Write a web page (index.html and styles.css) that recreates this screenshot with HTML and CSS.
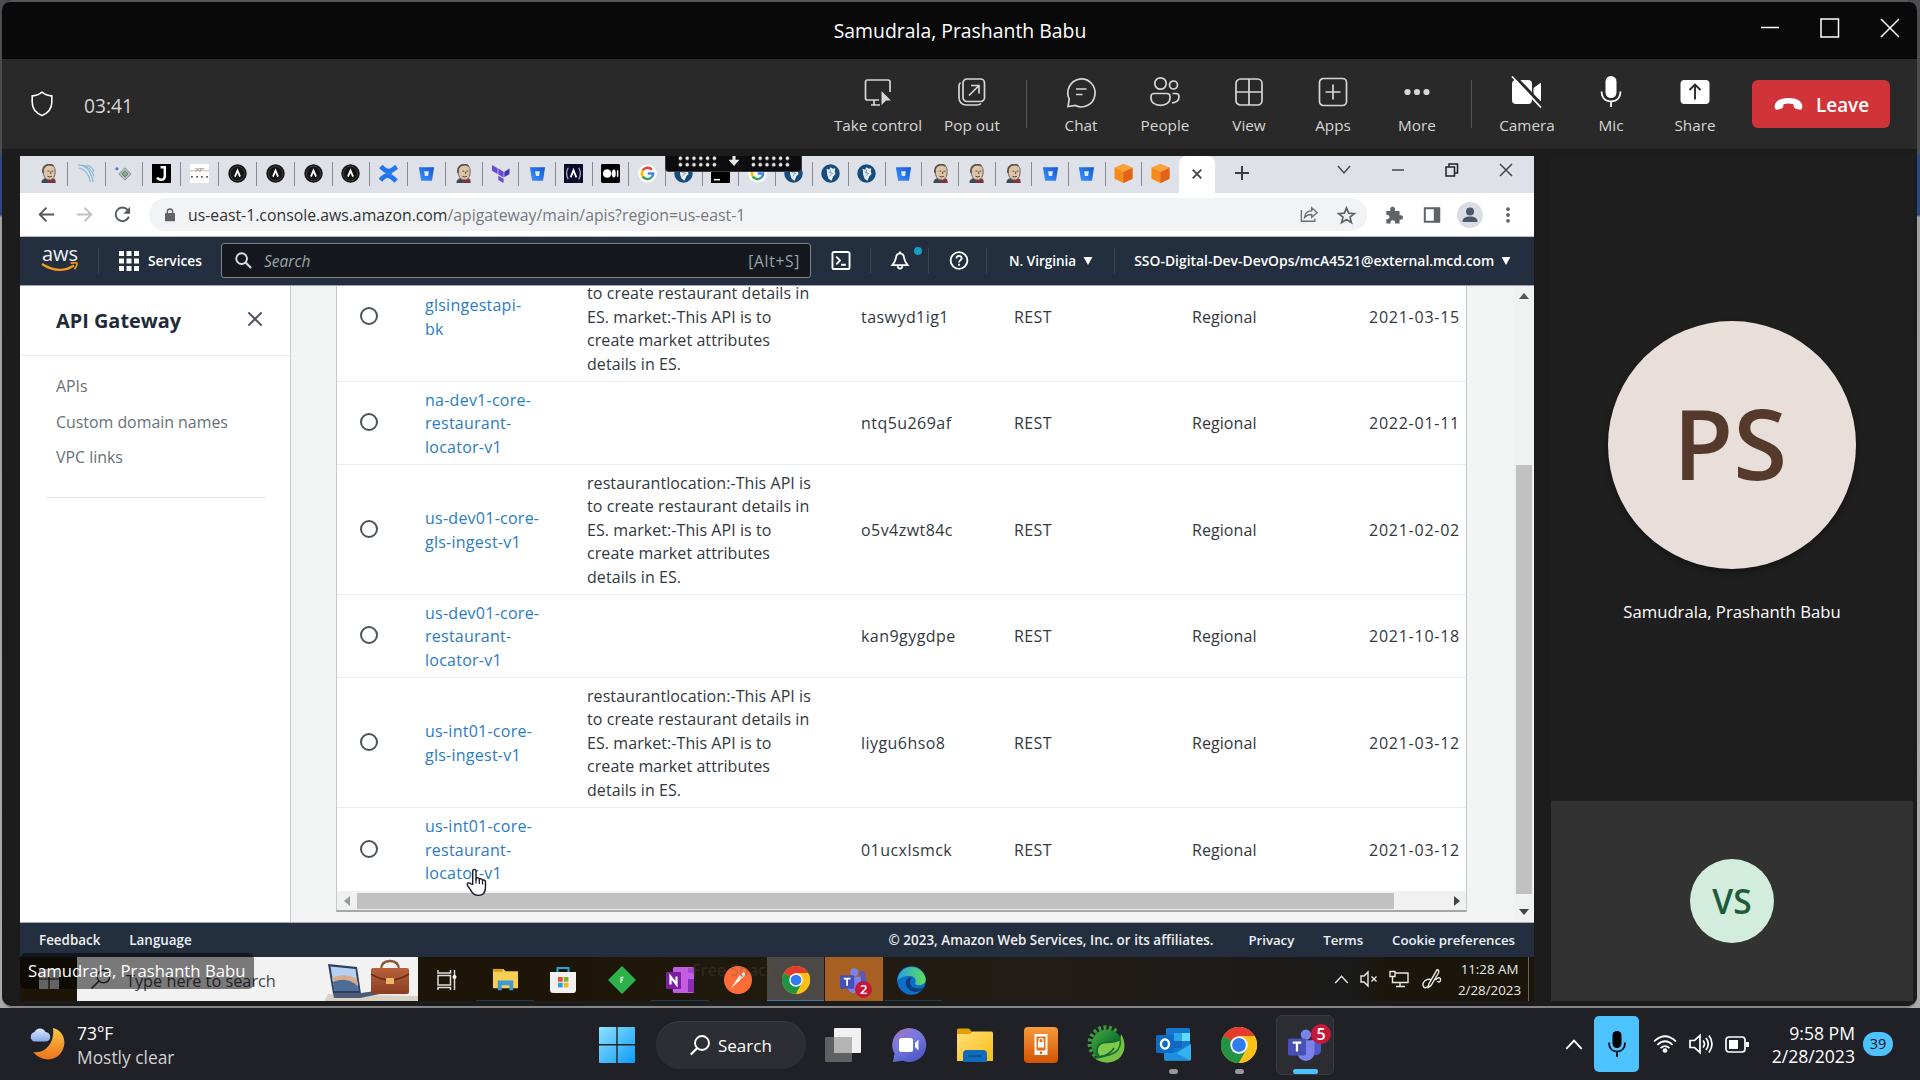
FILE: index.html
```html
<!DOCTYPE html>
<html lang="en">
<head>
<meta charset="utf-8">
<title>Samudrala, Prashanth Babu</title>
<link rel="stylesheet" href="styles.css">
</head>
<body>
<svg class="defs" aria-hidden="true">
  <defs>
    <linearGradient id="g-win" x1="0" y1="0" x2="1" y2="1"><stop offset="0" stop-color="#8fe2fd"/><stop offset="1" stop-color="#0a9bfb"/></linearGradient>
    <linearGradient id="g-moon" x1="0" y1="0" x2="0" y2="1"><stop offset="0" stop-color="#f6c945"/><stop offset="1" stop-color="#f0731c"/></linearGradient>
    <linearGradient id="g-cloud" x1="0" y1="0" x2="0" y2="1"><stop offset="0" stop-color="#dbe8fd"/><stop offset="1" stop-color="#86a9ec"/></linearGradient>
    <linearGradient id="g-edge" x1="0" y1="0" x2="1" y2="0"><stop offset="0" stop-color="#1f9fe4"/><stop offset="1" stop-color="#64de5a"/></linearGradient>
    <linearGradient id="g-chat" x1="0" y1="0" x2="0.6" y2="1"><stop offset="0" stop-color="#a86fb0"/><stop offset="0.45" stop-color="#7a7be0"/><stop offset="1" stop-color="#5059c9"/></linearGradient>
    <linearGradient id="g-fold" x1="0" y1="0" x2="1" y2="1"><stop offset="0" stop-color="#ffe07a"/><stop offset="1" stop-color="#fbbc13"/></linearGradient>
    <linearGradient id="g-lock" x1="0" y1="0" x2="0" y2="1"><stop offset="0" stop-color="#f79a3c"/><stop offset="1" stop-color="#d35400"/></linearGradient>
    <linearGradient id="g-gear" x1="0" y1="0" x2="1" y2="1"><stop offset="0" stop-color="#49ad3f"/><stop offset="0.6" stop-color="#0f6f33"/><stop offset="1" stop-color="#0f6f33"/></linearGradient>
    <linearGradient id="g-bag" x1="0" y1="0" x2="0" y2="1"><stop offset="0" stop-color="#b8623c"/><stop offset="1" stop-color="#8b3d22"/></linearGradient>
    <linearGradient id="g-bb" x1="1" y1="0" x2="0" y2="1"><stop offset="0" stop-color="#1558d6"/><stop offset="1" stop-color="#3a93ff"/></linearGradient>

    <symbol id="f-jenkins" viewBox="0 0 20 20"><path d="M2.500 20c0-3 2-4.500 4-5h8c2 .5 3 2 3 5z" fill="#3b4a5a"/><path d="M4.500 8c0-5 2.500-7.500 6.500-7.500S17 3 17 8s-2 9-6 9-6.500-4-6.500-9z" fill="#dcc4a9" stroke="#6b5a4c" stroke-width="1"/><path d="M4.300 9.500C3 4 6.500.7 11 .7c2 0 3 .5 4 1.300" fill="none" stroke="#5c4f45" stroke-width="1.700"/><path d="M9 13q2.300 1.300 4.500 0M9 7.500h1.700M13.300 7.500H15M12.300 8v2.500" stroke="#4b3a30" fill="none"/><path d="M10 16l3.500 1.500L17 15.500V20l-3.500-1.300L10 20z" fill="#9c2a30"/></symbol>
    <symbol id="f-curve" viewBox="0 0 20 20"><g fill="none" stroke="#7fb6dc" stroke-width="1.200"><path d="M1 1c9 0 14 7 16 18M5 1c7 1 11 6 13 12M2 4c7 2 11 7 12 15M10 1c4 1 7 4 8 7"/></g></symbol>
    <symbol id="f-diamond" viewBox="0 0 20 20"><path d="M10.500 4l6.500 6.500-6.500 6.500L4 10.500z" fill="#b4bfbb" stroke="#87928f"/><path d="M10.500 7.500l3 3-3 3-3-3z" fill="#8fae9f" stroke="#436b57"/><circle cx="2" cy="5" r="1.600" fill="#2f7de0"/></symbol>
    <symbol id="f-j" viewBox="0 0 20 20"><path d="M0 0h20v20H0z" fill="#000"/><path d="M9 3.500h4.500v9q0 4-4 4-3 0-4-2.300" fill="none" stroke="#fff" stroke-width="2.600"/></symbol>
    <symbol id="f-api" viewBox="0 0 20 20"><path d="M0 0h20v20H0z" fill="#fff"/><path d="M0 7h20M5 5h10" stroke="#bbb8ad" stroke-width="1.100"/><path d="M6 8l2-3 2 3M11 8V5h3" stroke="#a29f94" fill="none"/><path d="M1 13.500h2M6.500 13.500h2M11.500 13.500h2M17 13.500h2" stroke="#666" stroke-width="2"/></symbol>
    <symbol id="f-a" viewBox="0 0 20 20"><circle cx="10" cy="10" r="9.700" fill="#151515"/><circle cx="10" cy="10" r="7.500" fill="none" stroke="#4a4a4a" stroke-width=".8"/><path d="M7.300 13.300L10 7l2.700 6.300" fill="none" stroke="#fff" stroke-width="1.900"/></symbol>
    <symbol id="f-conf" viewBox="0 0 20 20"><path d="M2 2.500C6 7 8 8 11 7.500S15.500 5 18.500 3M1.500 17C5 13 6.500 12 9.500 12.300S14.500 14.500 18 18" fill="none" stroke="#2374ef" stroke-width="5"/><path d="M7 9.500l3.500 1 3-1" fill="none" stroke="#2f80f5" stroke-width="2"/></symbol>
    <symbol id="f-bb" viewBox="0 0 20 20"><path d="M2 3.500h16L15.800 17.500H4.300z" fill="url(#g-bb)"/><path d="M7.500 7.500h5l-.8 5H8.300z" fill="#dfe9fb"/></symbol>
    <symbol id="f-terra" viewBox="0 0 20 20"><path d="M1 1l6 3.400v6L1 7zM7.700 4.800l5.600 3.300v6L7.700 11zM7.700 12.400l5.600 3.200V20l-5.600-3.200z" fill="#6a4bd8"/><path d="M14 8.100l5.500-3.300v5.700L14 14z" fill="#4a36ad"/></symbol>
    <symbol id="f-pa" viewBox="0 0 20 20"><path d="M0 0h20v20H0z" fill="#0b0b2b"/><path d="M4.500 4Q1 10 4.500 16M15.500 4Q19 10 15.500 16" fill="none" stroke="#a8a8c2" stroke-width="1.300"/><path d="M7 14l3-7.500 3 7.500" fill="none" stroke="#fff" stroke-width="1.900"/></symbol>
    <symbol id="f-med" viewBox="0 0 20 20"><rect width="20" height="20" rx="1.500"/><circle cx="6.500" cy="10" r="4.500" fill="#fff"/><ellipse cx="13.500" cy="10" rx="2" ry="4.200" fill="#fff"/><path d="M17.500 6.500v7" stroke="#fff" stroke-width="1.500"/></symbol>
    <symbol id="f-g" viewBox="0 0 20 20"><circle cx="10" cy="10" r="9.800" fill="#fff"/><g fill="none" stroke-width="2.600"><path d="M14.600 6A6 6 0 0 0 5 6.800" stroke="#ea4335"/><path d="M5 6.800a6 6 0 0 0 0 6.400" stroke="#fbbc05"/><path d="M5 13.200a6 6 0 0 0 9 1.200" stroke="#34a853"/><path d="M14 14.400a6 6 0 0 0 2-4.400H10.300" stroke="#4285f4"/></g></symbol>
    <symbol id="f-whale" viewBox="0 0 20 20"><circle cx="10" cy="10" r="9.700" fill="#164d7c"/><path d="M6 5l2.500 1L10 3.500l2.500 1.500L15 4.500l-.5 3 .8 3L13 13l-2 4.500L8 15.500 6.500 11z" fill="#e9eff5"/><path d="M8 8.500l4.500 1.500M9 13l3-3.500M10 6v3" stroke="#6f97ba" stroke-width=".9"/></symbol>
    <symbol id="f-term" viewBox="0 0 20 20"><path d="M0 0h20v20H0z"/><path d="M3 16.500h6.500" stroke="#fff" stroke-width="1.600"/></symbol>
    <symbol id="f-cube" viewBox="0 0 20 20"><path d="M10 0l9.500 4v11.500L10 20 .5 15.500V4z" fill="#f58a1f"/><path d="M10 8.500l9.500-4.500v11.500L10 20z" fill="#e2611b"/><path d="M10 0l9.500 4L10 8.500.5 4z" fill="#f9a13b"/></symbol>
    <symbol id="i-chrome" viewBox="0 0 36 36"><circle cx="18" cy="18" r="18" fill="#fbc116"/><path d="M18 18L2.400 9A18 18 0 0 1 33.600 9L34 9.500H18z" fill="#e33b2e"/><path d="M2.400 9A18 18 0 0 0 18 36l7.500-13.500L18 18z" fill="#229342"/><path d="M18 36a18 18 0 0 0 15.600-27H18l7.600 13.200z" fill="#fbc116"/><circle cx="18" cy="18" r="8.700" fill="#fff"/><circle cx="18" cy="18" r="6.900" fill="#2f7cf0"/></symbol>
    <symbol id="i-teams" viewBox="0 0 36 36"><circle cx="19" cy="7" r="5.500" fill="#7b83eb"/><circle cx="30" cy="9" r="3.800" fill="#5059c9"/><path d="M25 13h10v10.500a5.500 5.500 0 0 1-10 3z" fill="#5059c9"/><path d="M10 13h18v13a9 9 0 0 1-18 0z" fill="#7b83eb"/><rect x="0" y="11" width="19" height="18" rx="1.500" fill="#4650b5"/><path d="M5 15.500h9M9.500 15.500V25" stroke="#fff" stroke-width="2.400"/></symbol>
    <symbol id="i-folder10" viewBox="0 0 28 28"><path d="M1 2h11l2 2.500h13V22H1z" fill="#f7cf52"/><path d="M1 2h10v3H1z" fill="#d9a01a"/><path d="M6 14h16v10h-4v-5h-8v5H6z" fill="#3f96d8"/></symbol>
    <symbol id="i-shield" viewBox="0 0 24 26"><path d="M12 1.200C9 3.800 6 4.700 2.200 4.900v6.600c0 6.300 3.800 10.400 9.800 13.100 6-2.700 9.800-6.800 9.800-13.100V4.900C18 4.700 15 3.800 12 1.200z" fill="none" stroke="#fff" stroke-width="1.600"/></symbol>
    <symbol id="i-x" viewBox="0 0 18 18"><path d="M1.500 1.500l15 15M16.500 1.500l-15 15" fill="none" stroke="currentColor" stroke-width="2.200"/></symbol>
    <symbol id="i-caret" viewBox="0 0 10 9"><path d="M0 0h10L5 9z" fill="currentColor"/></symbol>
    <symbol id="i-up" viewBox="0 0 16 10"><path d="M1 9l7-7.500L15 9" fill="none" stroke="currentColor" stroke-width="1.600"/></symbol>
    <symbol id="i-mag" viewBox="0 0 18 18"><circle cx="7" cy="7" r="5.700" fill="none" stroke="currentColor" stroke-width="2"/><path d="M11.200 11.200L17 17" stroke="currentColor" stroke-width="2.300"/></symbol>
  </defs>
</svg>

<div class="desktop">
<div class="window">
  <header class="titlebar">
    <span class="title">Samudrala, Prashanth Babu</span>
    <div class="wincontrols">
      <svg width="20" height="20"><path d="M1 9.500h18" stroke="#fff" stroke-width="1.500"/></svg>
      <svg width="20" height="20"><path d="M1 1h17.500v18H1z" fill="none" stroke="#fff" stroke-width="1.500"/></svg>
      <svg width="20" height="20"><path d="M1 1l18 18M19 1L1 19" stroke="#fff" stroke-width="1.500"/></svg>
    </div>
  </header>

  <div class="toolbar">
    <svg class="shield"><use href="#i-shield"/></svg>
    <span class="timer">03:41</span>
    <div class="tools">
      <div class="tool wide"><svg viewBox="0 0 32 32"><path d="M17 24H5.500a2 2 0 0 1-2-2V6a2 2 0 0 1 2-2H26a2 2 0 0 1 2 2v10M12 24v4.500M9 29h9" fill="none" stroke="currentColor" stroke-width="1.700"/><path d="M19.500 15l9.500 9.500h-5L19.500 29z" fill="currentColor"/></svg><span>Take control</span></div>
      <div class="tool wide"><svg viewBox="0 0 32 32"><rect x="7" y="3" width="21.500" height="22.500" rx="4" fill="none" stroke="currentColor" stroke-width="1.700"/><path d="M4.500 6.500C3 8 3 9 3 10v11c0 5 3 8 7.500 8H21c2 0 3-.5 4-1.500M13 19.500L22.500 10M15 9.500h8v8" fill="none" stroke="currentColor" stroke-width="1.700"/></svg><span>Pop out</span></div>
      <i class="vsep first"></i>
      <div class="tool"><svg viewBox="0 0 32 32"><path d="M3 30.500L4.200 23A13.600 14 0 1 1 10.500 29.500z" fill="none" stroke="currentColor" stroke-width="1.700"/><path d="M11 13h10.500M11 18.500h6.500" stroke="currentColor" stroke-width="1.700"/></svg><span>Chat</span></div>
      <div class="tool"><svg viewBox="0 0 32 32"><g fill="none" stroke="currentColor" stroke-width="1.700"><circle cx="11.500" cy="7.500" r="5.700"/><circle cx="24.500" cy="9" r="4"/><path d="M2 20.500a3 3 0 0 1 3-3h13a3 3 0 0 1 3 3v1.500c0 4.500-4 7.300-9.500 7.300S2 26.500 2 22zM23.500 17.500H27a3 3 0 0 1 3 3c0 4-2.500 6.500-7 6.300"/></g></svg><span>People</span></div>
      <div class="tool"><svg viewBox="0 0 32 32"><rect x="3" y="3" width="26" height="26" rx="4.500" fill="none" stroke="currentColor" stroke-width="1.700"/><path d="M16 3v26M3 16h26" stroke="currentColor" stroke-width="1.700"/></svg><span>View</span></div>
      <div class="tool"><svg viewBox="0 0 32 32"><rect x="2.500" y="2.500" width="27" height="27" rx="4" fill="none" stroke="currentColor" stroke-width="1.700"/><path d="M16 8.500v15M8.500 16h15" stroke="currentColor" stroke-width="1.700"/></svg><span>Apps</span></div>
      <div class="tool"><svg viewBox="0 0 32 32"><g fill="currentColor"><circle cx="6.500" cy="16" r="3.100"/><circle cx="16" cy="16" r="3.100"/><circle cx="25.500" cy="16" r="3.100"/></g></svg><span>More</span></div>
      <i class="vsep"></i>
      <div class="tool solid"><svg viewBox="0 0 32 32"><rect x="1" y="4" width="20" height="24" rx="4" fill="currentColor"/><path d="M22.500 12l7.500-5.500v19L22.500 20z" fill="currentColor"/><path d="M3.500 0L32 30" stroke="#292929" stroke-width="3"/><path d="M1 0.500l29 31" stroke="currentColor" stroke-width="1.800"/></svg><span>Camera</span></div>
      <div class="tool solid"><svg viewBox="0 0 32 32"><rect x="10.500" y="0" width="11" height="22" rx="5.500" fill="currentColor"/><path d="M6.500 15.500c0 6 3.500 10 9.500 10s9.500-4 9.500-10M16 25.500V31" fill="none" stroke="currentColor" stroke-width="1.800"/></svg><span>Mic</span></div>
      <div class="tool solid"><svg viewBox="0 0 32 32"><rect x="1.500" y="4" width="29" height="24" rx="4" fill="currentColor"/><path d="M16 23.500V9M10.500 14L16 8.500l5.500 5.500" fill="none" stroke="#292929" stroke-width="1.900"/></svg><span>Share</span></div>
      <div class="leave"><svg viewBox="0 0 30 14"><path d="M15 .8C24 .8 29.500 4.500 29.300 9.500c0 3-1.500 3.800-3.600 3.300l-3-.8c-2-.5-2.300-2-2.600-4.700Q15 5.500 9.900 7.300C9.600 10 9.300 11.500 7.300 12l-3 .8C2.200 13.300.8 12.500.7 9.500.5 4.500 6 .8 15 .8z" fill="#fff"/></svg><span>Leave</span></div>
    </div>
  </div>

  <main class="stage">
    <section class="shared">
      <div class="tabstrip">
        <div class="tabs a">
          <i><svg><use href="#f-jenkins"/></svg></i><i><svg><use href="#f-curve"/></svg></i><i><svg><use href="#f-diamond"/></svg></i><i><svg><use href="#f-j"/></svg></i><i><svg><use href="#f-api"/></svg></i><i><svg><use href="#f-a"/></svg></i><i><svg><use href="#f-a"/></svg></i><i><svg><use href="#f-a"/></svg></i><i><svg><use href="#f-a"/></svg></i><i><svg><use href="#f-conf"/></svg></i><i><svg><use href="#f-bb"/></svg></i>
        </div>
        <div class="tabs b">
          <i><svg><use href="#f-jenkins"/></svg></i><i><svg><use href="#f-terra"/></svg></i><i><svg><use href="#f-bb"/></svg></i><i><svg><use href="#f-pa"/></svg></i><i><svg><use href="#f-med"/></svg></i><i><svg><use href="#f-g"/></svg></i><i><svg><use href="#f-whale"/></svg></i><i><svg><use href="#f-term"/></svg></i><i><svg><use href="#f-g"/></svg></i><i><svg><use href="#f-whale"/></svg></i><i><svg><use href="#f-whale"/></svg></i><i><svg><use href="#f-whale"/></svg></i><i><svg><use href="#f-bb"/></svg></i><i><svg><use href="#f-jenkins"/></svg></i><i><svg><use href="#f-jenkins"/></svg></i><i><svg><use href="#f-jenkins"/></svg></i><i><svg><use href="#f-bb"/></svg></i><i><svg><use href="#f-bb"/></svg></i><i><svg><use href="#f-cube"/></svg></i><i><svg><use href="#f-cube"/></svg></i>
        </div>
        <div class="activetab"><svg width="10" height="10" viewBox="0 0 10 10"><path d="M.7.7l8.600 8.600M9.300.7L.7 9.300" stroke="#45484c" stroke-width="1.900"/></svg></div>
        <svg class="plus" width="16" height="16"><path d="M8 1v14M1 8h14" stroke="#3b3d40" stroke-width="2"/></svg>
        <div class="chromectl">
          <svg width="14" height="10"><path d="M1 1l6 7 6-7" fill="none" stroke="#444" stroke-width="1.400"/></svg>
          <svg width="14" height="10"><path d="M1 5h12" stroke="#444" stroke-width="1.500"/></svg>
          <svg width="14" height="14"><path d="M1 4h8.500v9H1zM4 4V1h8.500v9H9.500" fill="none" stroke="#222" stroke-width="1.500"/></svg>
          <svg width="14" height="14"><path d="M1 1l12 12M13 1L1 13" stroke="#444" stroke-width="1.500"/></svg>
        </div>
      </div>

      <div class="addressbar">
        <svg class="nav" viewBox="0 0 20 20"><path d="M19 10H3M10 2l-8 8 8 8" fill="none" stroke="#55595d" stroke-width="2.200"/></svg>
        <svg class="nav" viewBox="0 0 20 20"><path d="M1 10h16M10 2l8 8-8 8" fill="none" stroke="#bfc1c3" stroke-width="2.200"/></svg>
        <svg class="nav" viewBox="0 0 20 20"><path d="M17.500 12.500A8 8 0 1 1 16 4.500l1.500 2" fill="none" stroke="#55595d" stroke-width="2.300"/><path d="M19 1v8h-8z" fill="#55595d"/></svg>
        <div class="omnibox">
          <svg class="lock" viewBox="0 0 12 16"><rect x="0" y="5.500" width="12" height="10" rx="1" fill="#5f6368"/><path d="M2.800 6V4a3.200 3.200 0 0 1 6.400 0v2" fill="none" stroke="#5f6368" stroke-width="1.700"/></svg>
          <span class="url">us-east-1.console.aws.amazon.com<em>/apigateway/main/apis?region=us-east-1</em></span>
          <svg class="share" viewBox="0 0 20 18"><path d="M1.500 4v12.500h15v-3M5 12.500c.5-5 3.500-7.500 8-7.500V1.500l6 5.500-6 5V9c-4 0-6 1-8 3.500z" fill="none" stroke="#6b6f73" stroke-width="1.500"/></svg>
          <svg class="star" viewBox="0 0 20 19"><path d="M10 2l2.300 5.500 6 .5-4.600 3.800 1.500 5.700-5.200-3.200-5.200 3.200 1.500-5.700L1.700 8l6-.5z" fill="none" stroke="#5f6368" stroke-width="1.800"/></svg>
        </div>
        <svg class="ext" viewBox="0 0 20 20"><path d="M1.500 5.500h4.700C5 2.500 6.500.8 8.500.8s3.500 1.700 2.300 4.700h5.400v5c2.500-.8 3.800.5 3.800 2.200s-1.500 3-3.800 2.200v4.600h-5c.5-2.500-.7-3.700-2.500-3.700s-3 1.200-2.500 3.700H1.500v-5c2.300.5 3.500-.6 3.500-2.200s-1.200-2.700-3.500-2.200z" fill="#5f6368"/></svg>
        <svg class="ext" viewBox="0 0 20 20"><path d="M2 2.500h16v15H2z" fill="none" stroke="#5f6368" stroke-width="2.200"/><path d="M12 2h7v16h-7z" fill="#5f6368"/></svg>
        <svg class="avatar" viewBox="0 0 26 26"><circle cx="13" cy="13" r="13" fill="#dadde3"/><circle cx="13" cy="9.500" r="4" fill="#4b5668"/><path d="M5.500 20c0-4 3-5.500 7.500-5.500s7.500 1.500 7.500 5.500z" fill="#4b5668"/></svg>
        <svg class="ext" viewBox="0 0 20 20"><g fill="#5f6368"><circle cx="10" cy="3.500" r="2.100"/><circle cx="10" cy="10" r="2.100"/><circle cx="10" cy="16.500" r="2.100"/></g></svg>
      </div>

      <nav class="awsnav">
        <div class="awslogo"><span>aws</span><svg viewBox="0 0 38 11"><path d="M1 2q17 11 32 1.500" fill="none" stroke="#f79a1c" stroke-width="2.200"/><path d="M29.500 1.200q5.500-1 6.500 0 .5 2-2.500 6" fill="none" stroke="#f79a1c" stroke-width="1.700"/></svg></div>
        <i class="asep"></i>
        <svg class="waffle" viewBox="0 0 20 20"><g fill="#fff"><path d="M0 0h5v5H0zM7.500 0h5v5h-5zM15 0h5v5h-5zM0 7.500h5v5H0zM7.500 7.500h5v5h-5zM15 7.500h5v5h-5zM0 15h5v5H0zM7.500 15h5v5h-5zM15 15h5v5h-5z"/></g></svg>
        <span class="services">Services</span>
        <div class="awssearch"><svg><use href="#i-mag"/></svg><span class="ph">Search</span><span class="kbd">[Alt+S]</span></div>
        <div class="navicon w59"><svg viewBox="0 0 20 20"><rect x="1" y="1" width="18" height="18" rx="2" fill="none" stroke="#fff" stroke-width="2"/><path d="M5 6l4 4-4 4M10 14.500h5" fill="none" stroke="#fff" stroke-width="1.900"/></svg></div>
        <i class="asep"></i>
        <div class="navicon bell"><svg viewBox="0 0 20 20"><path d="M10 2.500c-2.500 0-4 2-4.300 4.800C5.300 10.500 4 12.500 2 14.800h16c-2-2.300-3.300-4.300-3.700-7.500C14 4.500 12.500 2.500 10 2.500zM10 .5v2M7.500 15.500c.3 4 4.700 4 5 0" fill="none" stroke="#fff" stroke-width="1.900"/></svg><b></b></div>
        <i class="asep"></i>
        <div class="navicon help"><svg viewBox="0 0 20 20"><circle cx="10" cy="10" r="8.800" fill="none" stroke="#fff" stroke-width="2"/><path d="M7.300 8c0-3.800 5.600-3.600 5.500-.3 0 1.800-2.700 2-2.700 4.300M10 13.500v2" fill="none" stroke="#fff" stroke-width="1.900"/></svg></div>
        <i class="asep"></i>
        <span class="region">N. Virginia</span><svg class="caret"><use href="#i-caret"/></svg>
        <i class="asep third"></i>
        <span class="account">SSO-Digital-Dev-DevOps/mcA4521@external.mcd.com</span><svg class="caret"><use href="#i-caret"/></svg>
      </nav>

      <div class="console">
        <aside class="sidenav">
          <div class="sidehead"><h1>API Gateway</h1><svg><use href="#i-x"/></svg></div>
          <ul><li>APIs</li><li>Custom domain names</li><li>VPC links</li></ul>
        </aside>
        <div class="content">
          <div class="tablewrap">
            <div class="row tall first"><i></i><a>glsingestapi-<br>bk</a><p>to create restaurant details in<br>ES. market:-This API is to<br>create market attributes<br>details in ES.</p><span class="id">taswyd1ig1</span><span class="ty">REST</span><span>Regional</span><span class="dt">2021-03-15</span></div>
            <div class="row"><i></i><a>na-dev1-core-<br>restaurant-<br>locator-v1</a><p></p><span class="id">ntq5u269af</span><span class="ty">REST</span><span>Regional</span><span class="dt">2022-01-11</span></div>
            <div class="row tall"><i></i><a>us-dev01-core-<br>gls-ingest-v1</a><p>restaurantlocation:-This API is<br>to create restaurant details in<br>ES. market:-This API is to<br>create market attributes<br>details in ES.</p><span class="id">o5v4zwt84c</span><span class="ty">REST</span><span>Regional</span><span class="dt">2021-02-02</span></div>
            <div class="row"><i></i><a>us-dev01-core-<br>restaurant-<br>locator-v1</a><p></p><span class="id">kan9gygdpe</span><span class="ty">REST</span><span>Regional</span><span class="dt">2021-10-18</span></div>
            <div class="row tall"><i></i><a>us-int01-core-<br>gls-ingest-v1</a><p>restaurantlocation:-This API is<br>to create restaurant details in<br>ES. market:-This API is to<br>create market attributes<br>details in ES.</p><span class="id">liygu6hso8</span><span class="ty">REST</span><span>Regional</span><span class="dt">2021-03-12</span></div>
            <div class="row last"><i></i><a>us-int01-core-<br>restaurant-<br>locator-v1</a><p></p><span class="id">01ucxlsmck</span><span class="ty">REST</span><span>Regional</span><span class="dt">2021-03-12</span></div>
            <div class="hscroll"><svg viewBox="0 0 6 10"><path d="M6 0v10L0 5z" fill="#9a9a9a"/></svg><b></b><svg viewBox="0 0 6 10"><path d="M0 0v10l6-5z" fill="#444"/></svg></div>
          </div>
          <div class="vscroll"><svg viewBox="0 0 10 6"><path d="M0 6h10L5 0z" fill="#555"/></svg><b></b><svg viewBox="0 0 10 6"><path d="M0 0h10L5 6z" fill="#444"/></svg></div>
        </div>
      </div>

      <footer class="awsfoot">
        <span class="fb">Feedback</span><span class="lang">Language</span>
        <span class="copy">© 2023, Amazon Web Services, Inc. or its affiliates.</span><span class="priv">Privacy</span><span class="terms">Terms</span><span class="cook">Cookie preferences</span>
      </footer>

      <div class="bar10">
        <div class="start10"><svg viewBox="0 0 20 20"><path d="M0 0h9.400v9.400H0zM10.600 0H20v9.400h-9.400zM0 10.600h9.400V20H0zM10.600 10.600H20V20h-9.400z" fill="#c9c9c9"/></svg></div>
        <div class="search10"><svg class="m" viewBox="0 0 20 20"><circle cx="12.500" cy="7.500" r="6.300" fill="none" stroke="#333" stroke-width="1.400"/><path d="M8 12l-7.500 7.500" stroke="#333" stroke-width="1.600"/></svg><span>Type here to search</span>
          <svg class="art" viewBox="0 0 94 42"><path d="M4 36l90 2v6H0z" fill="#d9d2c6"/><path d="M4 6l29 3 4 27H9z" fill="#2e3d60"/><path d="M6.500 8.500l25 2.500 3 22H10.500z" fill="#b4d2f0"/><path d="M8 20q12-6 25 1l1 6H9.500z" fill="#d9ab8c"/><path d="M9 24q14-6 24.500 4l1 5H10.500z" fill="#4b6d98"/><path d="M9 35h28l22-3-3 4-20 4H10z" fill="#4e5a78"/><path d="M57 12q0-9 9-9t9 9" fill="none" stroke="#8a5a38" stroke-width="2.300"/><rect x="47" y="10" width="38" height="26" rx="2" fill="url(#g-bag)"/><path d="M47 16q19 12 38 0" fill="none" stroke="#6b2c16" stroke-width="1.500"/><rect x="62" y="20" width="8" height="6" fill="#e9b765"/></svg></div>
        <div class="apps10">
          <i><svg width="20" height="20" viewBox="0 0 20 20"><path d="M1 5.500h12.500v9.500H1zM1 0v3h12.500V0M1 20v-2.500h12.500V20M17.500 0v20" fill="none" stroke="#ddd" stroke-width="1.500"/><circle cx="17.500" cy="7" r="2" fill="#fff"/></svg></i>
          <i class="ul"><svg width="27" height="27"><use href="#i-folder10"/></svg></i>
          <i><svg width="28" height="28" viewBox="0 0 28 28"><path d="M8.500 7V2h11v5" fill="none" stroke="#23a6e0" stroke-width="2"/><path d="M1 6h26v18q0 3-3 3H4q-3 0-3-3z" fill="#f1f1f1"/><path d="M9 11h4.700v4.700H9z" fill="#e8502f"/><path d="M14.700 11h4.700v4.700h-4.700z" fill="#7eb72a"/><path d="M9 16.700h4.700v4.700H9z" fill="#2a9fe0"/><path d="M14.700 16.700h4.700v4.700h-4.700z" fill="#f5b81c"/></svg></i>
          <i><svg width="28" height="28" viewBox="0 0 28 28"><path d="M14 0l14 14-14 14L0 14z" fill="#2db14a"/><path d="M13 17v-5.500h2.500M13 14h2" fill="none" stroke="#dff3e2" stroke-width="1.300"/></svg></i>
          <i class="ul"><svg width="28" height="26" viewBox="0 0 28 26"><rect x="7" width="21" height="26" rx="1.500" fill="#c45de0"/><path d="M22 1h6v5h-6z" fill="#a545cc"/><path d="M22 12h6v13h-6z" fill="#8a2cb5"/><rect y="5" width="15" height="17" rx="1" fill="#7a1fa2"/><path d="M4.500 17.500V9.500l6 8V9.500" fill="none" stroke="#fff" stroke-width="2.200"/></svg></i>
          <i><svg width="28" height="28" viewBox="0 0 28 28"><circle cx="14" cy="14" r="14" fill="#ff6c37"/><path d="M7 22l9-13 3 2.500L8.500 21zM17 8l3-2 1.500 3-2 2z" fill="#fff"/></svg></i>
          <i class="on"><svg width="28" height="28"><use href="#i-chrome"/></svg></i>
          <i class="alert"><svg width="27" height="27"><use href="#i-teams"/></svg><b>2</b></i>
          <i class="ul"><svg width="29" height="29" viewBox="0 0 29 29"><circle cx="14.500" cy="14.500" r="14.300" fill="#0f6fc6"/><path d="M.3 15A14.300 14.300 0 0 1 28.700 13c.3 4-3 6.500-8 6-3-.5-2.500-2-2-4 0-3-2.500-5-6-5C7 10 2 12 .3 15z" fill="url(#g-edge)"/><path d="M10 13c-3 5 0 12 8 13 4 0 7-2 9-5-6 3-14 1-14-5 0-2 1-3 2-4-2-1-4 0-5 1z" fill="#0a3f7d"/></svg></i>
        </div>
        <span class="ghost">Free Space</span>
        <div class="tray10">
          <svg width="15" height="9"><use href="#i-up"/></svg>
          <svg width="18" height="16" viewBox="0 0 18 16"><path d="M1 5h3l4-4v14l-4-4H1zM11.500 5.500l5 5M16.500 5.500l-5 5" fill="none" stroke="#e8e8e8" stroke-width="1.400"/></svg>
          <svg width="20" height="18" viewBox="0 0 20 18"><path d="M6 3h13v9.500H3.500V9M11 12.500V16M7 16.500h9M1 1.500h5v5H1zM3.500 6v6.500" fill="none" stroke="#e8e8e8" stroke-width="1.400"/></svg>
          <svg width="20" height="20" viewBox="0 0 20 20"><path d="M15 .8q2.500.2 1.500 3L9 16.500l-2.500 2 .3-3.500zM8.500 10.500C4 9.500.5 13 1 16.500c1 3.500 5 2.500 6-1M13.500 11c2-3 5.500-3 5 .3-.3 2-2.500 2.200-3 .7" fill="none" stroke="#e8e8e8" stroke-width="1.400"/></svg>
          <div class="clock10"><span>11:28 AM</span><span>2/28/2023</span></div>
        </div>
      </div>

      <div class="dragbar"><i></i><svg viewBox="0 0 14 14"><path d="M5 0h4v6h5l-7 8-7-8h5z" fill="#e6e6e6"/></svg><i></i></div>
      <svg class="hand" viewBox="0 0 22 30"><path d="M7 17V3.500C7 .5 10.500.5 10.500 3.500V11c1-1.500 3.500-1 3.500.7 1-1 3.200-.7 3.400 1 1.200-.8 3 0 3 1.800V20c0 5-2 8.500-7.500 8.500-5 0-6.500-2.500-8-5.500L1.500 18C.5 15.500 3.500 14.500 5 16.500z" fill="#fff" stroke="#1b1b2b" stroke-width="1.500"/><path d="M10.500 11v5M14 12v4.500M17.300 13v4" stroke="#1b1b2b" stroke-width="1.300"/></svg>
      <span class="presenter">Samudrala, Prashanth Babu</span>
    </section>

    <section class="people">
      <div class="tile big"><div class="av"><span>PS</span></div><span>Samudrala, Prashanth Babu</span></div>
      <div class="tile small"><div class="av"><span>VS</span></div></div>
    </section>
  </main>
</div>

<div class="taskbar">
  <div class="weather">
    <svg width="36" height="36" viewBox="0 0 36 36"><path d="M24 2c12 3 15 17 7 26-7 8-19 7-27-2 12 2 22-9 20-24z" fill="url(#g-moon)"/><path d="M5 15.500a5 5 0 0 1 .5-9.500 6 6 0 0 1 11 0c6 0 6.500 9.500.5 9.500z" fill="url(#g-cloud)"/></svg>
    <div><span class="temp">73°F</span><span class="cond">Mostly clear</span></div>
  </div>
  <div class="pinned">
    <i class="cell"><svg width="36" height="36" viewBox="0 0 36 36"><path d="M1 0h16.300v17H0V1q0-1 1-1zM18.700 0H35q1 0 1 1v16H18.700zM0 18.400h17.300V36H1q-1 0-1-1zM18.700 18.400H36V35q0 1-1 1H18.700z" fill="url(#g-win)"/></svg></i>
    <div class="searchpill"><svg viewBox="0 0 20 20"><circle cx="12" cy="8" r="7" fill="none" stroke="#fff" stroke-width="1.900"/><path d="M7.300 13L.8 19.500" stroke="#fff" stroke-width="2.200"/></svg><span>Search</span></div>
    <i class="cell"><svg width="36" height="34" viewBox="0 0 36 34"><rect y="9" width="27" height="25" rx="1" fill="#606060"/><rect x="9" width="27" height="25" rx="1" fill="#f1f1f1"/><path d="M9 9h18v16H9z" fill="#b4b4b4"/></svg></i>
    <i class="cell"><svg width="34" height="34" viewBox="0 0 34 34"><path d="M17 0a17 17 0 1 1-6 32.800L1 34l1.500-8.500A17 17 0 0 1 17 0z" fill="url(#g-chat)"/><rect x="7" y="10" width="14" height="14" rx="2.500" fill="#fff"/><path d="M23 15l3.500-3.500v11L23 19z" fill="#fff"/></svg></i>
    <i class="cell"><svg width="36" height="34" viewBox="0 0 36 34"><path d="M0 2q0-1.500 1.500-1.500H11q1.500 0 2.500 1.500l1.500 2v5H0z" fill="#e0a006"/><path d="M0 6h13l2.500-2.500H34.500Q36 3.500 36 5v28H0z" fill="url(#g-fold)"/><path d="M6 34V26q0-4 4-4h16q4 0 4 4v8z" fill="#0f6cbd"/><path d="M11 28h14" stroke="#0a4a8a" stroke-width="1.500"/></svg></i>
    <i class="cell"><svg width="34" height="36" viewBox="0 0 34 36"><rect width="34" height="36" rx="4" fill="url(#g-lock)"/><path d="M10.500 7h13v21h-13z" fill="#fff"/><path d="M12.500 9.500h9v14h-9z" fill="#e2711d"/><path d="M14 15h6v5.500h-6z" fill="#fff"/><path d="M15 15v-2q0-1.700 2-1.700t2 1.700v2" fill="none" stroke="#fff" stroke-width="1.200"/><circle cx="17" cy="25.700" r="1.200" fill="#d35400"/></svg></i>
    <i class="cell"><svg width="36" height="37" viewBox="0 0 36 37"><path d="M27 5.200A16 16 0 1 0 9 31.500" fill="none" stroke="#3c9b3c" stroke-width="4.500" stroke-dasharray="2.800 2.400"/><circle cx="18" cy="19" r="15.500" fill="url(#g-gear)"/><path d="M32 8C37 16 37 26 30 32.500 23 38 13 38 6 32.500 17 33 30.500 24 32 8z" fill="#74bf44"/><path d="M31 13c2 11-6 17-21 17.500C5 21 11 16 18 16.500c6 0 10-.5 13-3.500z" fill="#7fca4a" stroke="#12692f" stroke-width="1.500"/><path d="M4 31.500C12 32 21 28.500 25 22" fill="none" stroke="#12692f" stroke-width="1.600"/></svg></i>
    <i class="cell run"><svg width="35" height="33" viewBox="0 0 35 33"><rect x="10" y="0" width="24" height="28" rx="1.500" fill="#1577cf"/><path d="M18 5h8v8h-8z" fill="#28a8ea"/><path d="M26 5h8v8h-8z" fill="#5fdcff"/><path d="M18 13h8v7h-8z" fill="#0f68b8"/><path d="M8 32l27-16v15q0 1.500-1.500 1.500H9z" fill="#31b3f2"/><path d="M8 18l26 14.500H10q-2 0-2-2z" fill="#1f8fdf"/><rect y="7" width="18" height="18" rx="1.500" fill="#0f6cc4"/><ellipse cx="9" cy="16" rx="4" ry="4.600" fill="none" stroke="#fff" stroke-width="2.400"/></svg></i>
    <i class="cell run"><svg width="36" height="36"><use href="#i-chrome"/></svg></i>
    <i class="cell teams"><svg width="36" height="34"><use href="#i-teams"/></svg><b>5</b></i>
  </div>
  <div class="tray">
    <svg class="chev"><use href="#i-up"/></svg>
    <div class="mictile"><svg width="18" height="26" viewBox="0 0 18 26"><rect x="4.500" y="0" width="9" height="17" rx="4.500"/><path d="M1 11.500c0 5.500 3 9 8 9s8-3.500 8-9M9 20.500V26" fill="none" stroke="#000" stroke-width="1.700"/></svg></div>
    <svg width="24" height="18" viewBox="0 0 24 18"><g fill="none" stroke="#fff" stroke-width="1.700"><path d="M1 6.500Q12-4 23 6.500M4.300 10Q12 2.500 19.700 10M7.500 13.200Q12 9 16.500 13.200"/></g><circle cx="12" cy="15.500" r="2.300" fill="#fff"/></svg>
    <svg width="24" height="20" viewBox="0 0 24 20"><g fill="none" stroke="#fff" stroke-width="1.700"><path d="M1 6.500h4.500L11 1.500v17l-5.500-5H1zM14 6.500q3 3.500 0 7M17 4q4.500 6 0 12M20 1.500q6 8.500 0 17"/></g></svg>
    <svg width="24" height="17" viewBox="0 0 24 17"><rect x="1" y="1" width="19" height="15" rx="3" fill="none" stroke="#fff" stroke-width="1.700"/><path d="M4 4h9v9H4zM21 6h3v5h-3z" fill="#fff"/></svg>
    <div class="clock"><span>9:58 PM</span><span>2/28/2023</span></div>
    <b class="count">39</b>
  </div>
</div>
</div>
</body>
</html>
```
FILE: styles.css
```css
* { box-sizing: border-box; }
html, body { margin: 0; padding: 0; }
body { width: 1920px; height: 1080px; overflow: hidden; font-family: "Open Sans", "Noto Sans", sans-serif; }
svg { display: block; flex: none; overflow: visible; }
span { white-space: nowrap; }
.defs { position: absolute; width: 0; height: 0; }

.desktop { width: 1920px; height: 1080px; display: flex; flex-direction: column; background: linear-gradient(#4b4d50 0, #4b4d50 153px, #2c4a80 155px, #2c4a80 215px, #a0a0a0 217px, #a9abad 1008px); }

/* meeting window */
.window { height: 1006px; margin: 0 3px 0 2px; padding-top: 2px; display: flex; flex-direction: column; border-radius: 10px; background: #1f1f1f; overflow: hidden; box-shadow: inset 0 2px 0 #55575a, 0 2px 0 #858585; flex: none; }
.titlebar { height: 57px; background: #090909; border-bottom: 1px solid #000; display: flex; align-items: center; justify-content: center; position: relative; flex: none; border-radius: 8px 8px 0 0; }
.title { color: #fff; font-size: 19.400px; margin-left: 1px; }
.wincontrols { position: absolute; right: 17px; top: 16px; display: flex; gap: 40px; }
.toolbar { height: 90px; background: #292929; display: flex; align-items: center; flex: none; padding: 0 27px 0 28px; }
.shield { width: 24px; height: 26px; }
.timer { color: #d6d6d6; font-size: 19.200px; margin-left: 30px; padding-top: 2px; }
.tools { display: flex; margin-left: auto; height: 90px; }
.tool { width: 84px; display: flex; flex-direction: column; align-items: center; padding-top: 17px; color: #d6d6d6; font-size: 15.300px; line-height: 20px; }
.tool.wide { width: 94px; }
.tool svg { width: 32px; height: 32px; margin-bottom: 7px; }
.tool.solid svg { color: #fff; }
.vsep { width: 1px; height: 48px; background: #555; margin: 21px 13px 0 12px; flex: none; }
.vsep.first { margin: 21px 12px 0 7px; }
.leave { width: 138px; height: 48px; margin: 21px 0 0 15px; border-radius: 6px; background: #d13438; color: #fff; font-weight: 600; font-size: 18.900px; display: flex; align-items: center; padding-left: 22px; gap: 13px; }
.leave svg { width: 29px; height: 14px; }
.leave span { padding-top: 2px; }

.stage { flex: 1; display: flex; padding: 7px 4px 5px 18px; background: #1c1c1c; }
.shared { width: 1514px; height: 845px; display: flex; flex-direction: column; position: relative; overflow: hidden; background: #fff; flex: none; }

/* browser chrome */
.tabstrip { height: 37px; background: #dee1e7; display: flex; align-items: stretch; padding-left: 10px; flex: none; }
.tabs { display: grid; grid-auto-flow: column; align-items: center; }
.tabs.a { width: 416px; grid-auto-columns: 1fr; }
.tabs.b { width: 733px; grid-auto-columns: 1fr; }
.tabs i { display: flex; justify-content: center; align-items: center; height: 24px; margin-top: -2px; border-right: 1px solid #878a90; }
.tabs.b i:last-child { border-right: 0; }
.tabs svg { width: 19px; height: 19px; }
.activetab { width: 36px; background: #fff; border-radius: 8px 8px 0 0; display: flex; align-items: center; justify-content: center; padding-bottom: 2px; }
.plus { margin: 9px 0 0 19px; }
.chromectl { margin-left: auto; display: flex; align-items: center; gap: 40px; padding: 0 21px 9px 0; }
.addressbar { height: 44px; display: flex; align-items: center; background: #fff; border-bottom: 1px solid #b9c0c7; padding: 0 17px 0 18px; flex: none; }
.nav { width: 17px; height: 17px; margin-right: 21px; }
.omnibox { width: 1220px; height: 33px; margin: 0 18px 0 -3px; border-radius: 17px; background: #f1f3f4; display: flex; align-items: center; padding: 0 11px 0 16px; }
.lock { width: 10px; height: 14px; }
.url { margin-left: 13px; font-size: 15.800px; color: #303236; }
.url em { font-style: normal; color: #75797e; }
.share { width: 18px; height: 17px; margin-left: auto; }
.star { width: 19px; height: 18px; margin-left: 19px; }
.ext { width: 18px; height: 18px; margin-right: 20px; }
.avatar { width: 26px; height: 26px; margin: 0 16px 0 -4px; }
.addressbar > .ext:last-child { margin-right: 0; }

/* console header */
.awsnav { height: 48px; background: #232f3e; display: flex; align-items: center; color: #fff; font-weight: 600; font-size: 13.700px; flex: none; padding: 0 0 1px 21px; }
.awslogo { width: 38px; display: flex; flex-direction: column; align-items: center; line-height: 15px; font-size: 20px; font-weight: 500; }
.awslogo span { margin-top: -2px; color: #eef0f2; }
.awslogo svg { width: 38px; height: 11px; margin-top: 1px; }
.asep { width: 1px; height: 25px; background: #3a4656; flex: none; }
.awslogo + .asep { margin: 0 20px 0 19px; }
.waffle { width: 20px; height: 20px; margin-right: 9px; }
.services { width: 73px; }
.awssearch { width: 590px; height: 35px; border: 1px solid #7d8488; border-radius: 3px; background: #15191f; display: flex; align-items: center; padding: 0 10px 0 13px; color: #9aa5a5; font-weight: 400; font-size: 15.500px; }
.awssearch svg { width: 17px; height: 17px; color: #ddd; margin-right: 12px; }
.ph { font-style: italic; }
.kbd { margin-left: auto; letter-spacing: .7px; }
.navicon { width: 57px; display: flex; justify-content: center; position: relative; }
.navicon.w59 { width: 59px; }
.navicon.help { padding-left: 2px; }
.navicon svg { width: 20px; height: 19px; }
.navicon.bell b { position: absolute; width: 8px; height: 8px; border-radius: 50%; background: #14a0c6; left: 43px; top: -4px; }
.region { margin-left: 22px; font-size: 13.500px; }
.account { margin-left: 19px; font-size: 13.900px; }
.caret { width: 10px; height: 8px; margin-left: 7px; }
.asep.third { margin-left: 21px; }

/* console body */
.console { height: 637px; display: flex; background: #f2f3f3; border-top: 1px solid #97a3b0; }
.sidenav { width: 271px; background: #fff; border-right: 1px solid #c9cdcd; }
.sidehead { height: 70px; display: flex; align-items: center; padding: 0 27px 1px 36px; border-bottom: 1px solid #ebeded; justify-content: space-between; }
.sidehead h1 { margin: 0; font-size: 19.900px; font-weight: 700; color: #1f2a38; }
.sidehead svg { width: 16px; height: 16px; color: #4a5561; margin-top: -3px; }
.sidenav ul { list-style: none; margin: 0 24px 0 26px; padding: 13px 0 21px 10px; border-bottom: 1px solid #e4e6e6; font-size: 15.900px; line-height: 35.500px; color: #687078; }
.content { flex: 1; display: flex; padding-left: 45px; }
.tablewrap { width: 1131px; height: 626px; background: #fff; border: 1px solid #c3c8c8; border-top: 0; border-bottom: 2px solid #a2a8a8; overflow: hidden; display: flex; flex-direction: column; }
.row { height: 83px; flex: none; display: grid; grid-template-columns: 88px 162px 274px 153px 178px 177px 98px; align-items: center; border-bottom: 1px solid #eaeded; font-size: 16px; letter-spacing: .07px; line-height: 23.600px; color: #32383e; padding-top: 2px; }
.row.tall { height: 130px; }
.row.last { border-bottom: 0; }
.row.first { margin-top: -34px; }
.row > i { width: 18px; height: 18px; border: 2px solid #4c545c; border-radius: 50%; margin: -4px 0 0 23px; }
.row a { color: #2a7cc4; letter-spacing: .25px; }
.row p { margin: 0; white-space: nowrap; }
.row.first p { padding-top: 23.600px; }
.row .id { letter-spacing: .45px; }
.row .ty { letter-spacing: .4px; }
.row .dt { letter-spacing: .75px; }
.hscroll { height: 20px; margin-top: auto; background: #f1f1f1; display: flex; align-items: center; padding: 0 6px 0 7px; }
.hscroll b { width: 1037px; height: 16px; background: #c1c1c1; margin: 0 60px 0 7px; }
.hscroll svg { width: 6px; height: 10px; }
.vscroll { width: 21px; margin-left: auto; background: #f0f1f1; display: flex; flex-direction: column; align-items: center; padding: 7px 0; }
.vscroll svg { width: 10px; height: 6px; }
.vscroll b { width: 16px; height: 429px; background: #c1c1c1; margin: auto 0 15px; }

.awsfoot { height: 35px; background: #232f3e; border-top: 1px solid #a5adb5; color: #eef0f2; font-size: 13.400px; font-weight: 600; display: flex; align-items: center; padding: 0 19px; flex: none; }
.lang { margin-left: 29px; }
.priv, .terms, .cook { font-size: 13.300px; letter-spacing: -.05px; }
.copy { margin-left: auto; font-size: 13.400px; letter-spacing: .04px; }
.priv { margin-left: 35px; }
.terms { margin-left: 29px; }
.cook { margin-left: 29px; }

/* remote desktop task bar */
.bar10 { height: 44px; background: linear-gradient(90deg, #1d1608 0, #1d1608 560px, #241d17 1000px, #1a1a1a 1330px, #1b160b 1370px); display: flex; align-items: center; flex: none; position: relative; }
.start10 { width: 57px; display: flex; justify-content: center; }
.start10 svg { width: 20px; height: 20px; }
.search10 { width: 341px; height: 44px; background: #f2f2f2; display: flex; align-items: center; padding-left: 14px; color: #454545; font-size: 16.300px; }
.search10 .m { width: 20px; height: 20px; margin-right: 15px; }
.search10 span { padding-top: 4px; }
.search10 .art { width: 94px; height: 42px; margin-left: auto; }
.apps10 { display: grid; grid-template-columns: repeat(9, 58.200px); height: 44px; }
.apps10 i { display: flex; align-items: center; justify-content: center; position: relative; padding: 2px 0 0; font-style: normal; }
.apps10 .ul { box-shadow: inset 0 -2px 0 -1px #1c3c50; }
.apps10 .on { background: #4b4845; border-bottom: 1px solid #3f7ea0; margin: 0 1px 0 0; }
.apps10 .alert { background: #a85f22; margin: 0 1px 0 0; }
.apps10 b { position: absolute; left: 30px; top: 24px; width: 17px; height: 17px; border-radius: 50%; background: #c4193a; color: #fff; font-size: 13px; line-height: 17px; text-align: center; font-weight: 600; }
.apps10 i:last-child { padding-right: 2px; }
.ghost { position: absolute; left: 672px; top: 2px; font-size: 16px; font-weight: 600; color: #5a5146; opacity: .28; }
.tray10 { margin-left: auto; height: 44px; display: flex; align-items: center; color: #e8e8e8; border-right: 1px solid #6a665c; margin-right: 5px; padding-right: 7px; }
.tray10 > svg:nth-child(2) { margin-left: 11px; }
.tray10 > svg:nth-child(3) { margin-left: 11px; }
.tray10 > svg:nth-child(4) { margin-left: 13px; }
.clock10 { margin-left: 16px; display: flex; flex-direction: column; align-items: center; font-size: 13.300px; line-height: 21px; padding-top: 2px; }

/* overlays on the shared screen */
.dragbar { position: absolute; left: 645px; top: 0; width: 137px; height: 16px; background: #0c0c0e; border: 1px solid #3a3a44; border-top: 0; border-radius: 0 0 4px 4px; display: flex; justify-content: center; gap: 10px; }
.dragbar i { width: 41px; height: 12px; background: radial-gradient(circle, #e8e8e8 1.500px, transparent 2.200px) 0 -1px / 6.800px 6.500px; }
.dragbar svg { width: 12px; height: 11px; margin-top: -1px; }
.hand { position: absolute; left: 446px; top: 712px; width: 21px; height: 29px; }
.presenter { position: absolute; left: 0; top: 797px; width: 234px; height: 36px; padding-left: 8px; background: rgba(0, 0, 0, .5); color: #fff; font-size: 16.700px; line-height: 35px; border-radius: 6px; }

/* participants */
.people { flex: 1; margin-left: 17px; display: flex; flex-direction: column; }
.tile { display: flex; flex-direction: column; align-items: center; }
.tile.big { height: 645px; background: #1f1f1f; color: #fff; font-size: 16.700px; padding-top: 165px; }
.big .av { width: 248px; height: 248px; border-radius: 50%; background: #e8deda; color: #55392a; font-size: 98px; line-height: 132px; font-weight: 600; letter-spacing: 0; display: flex; align-items: center; justify-content: center; box-shadow: 0 3px 6px rgba(0, 0, 0, .4); margin-bottom: 31px; padding: 0 4px 7px 0; }
.tile.small { height: 200px; background: #323232; padding-top: 58px; }
.small .av { width: 84px; height: 84px; border-radius: 50%; background: #d2ecde; color: #1c5c38; font-size: 33.500px; font-weight: 600; display: flex; align-items: center; justify-content: center; padding-bottom: 1px; }

/* host task bar */
.taskbar { margin-top: auto; height: 72px; background: #202126; display: flex; align-items: center; color: #fff; position: relative; flex: none; }
.weather { width: 584px; display: flex; align-items: center; padding-left: 29px; gap: 12px; }
.weather div { display: flex; flex-direction: column; font-size: 17.400px; line-height: 24px; padding-top: 2px; }
.cond { color: #d0d0d2; }
.pinned { display: flex; align-items: center; height: 72px; padding-top: 1px; }
.cell { width: 66px; height: 60px; display: flex; align-items: center; justify-content: center; position: relative; font-style: normal; }
.searchpill { width: 150px; height: 48px; margin: 0 4px 0 6px; border-radius: 24px; background: #2d2e33; box-shadow: inset 0 1px 0 #3b3c41; display: flex; align-items: center; padding-left: 34px; gap: 8px; font-size: 17px; }
.searchpill svg { width: 20px; height: 20px; }
.searchpill span { padding-top: 1px; }
.cell.run::after { content: ""; position: absolute; left: 29px; bottom: 1px; width: 9px; height: 5px; border-radius: 3px; background: #96979a; }
.cell.teams { background: #2c2d32; border: 1px solid #3a3b40; border-radius: 6px; width: 58px; margin-left: 4px; }
.cell.teams::after { content: ""; position: absolute; left: 16px; bottom: 0; width: 25px; height: 5px; border-radius: 3px; background: #4cc2ff; }
.cell.teams b { position: absolute; left: 34px; top: 8px; width: 20px; height: 20px; border-radius: 50%; background: #c4193a; font-size: 16px; line-height: 20px; text-align: center; font-weight: 600; }
.tray { margin-left: auto; display: flex; align-items: center; padding-right: 27px; }
.chev { width: 18px; height: 11px; margin-right: 11px; }
.mictile { width: 45px; height: 56px; border-radius: 5px; background: #4cc2ff; display: flex; align-items: center; justify-content: center; margin-right: 14px; }
.mictile + svg, .mictile + svg + svg { margin-right: 12px; }
.clock { width: 106px; display: flex; flex-direction: column; align-items: flex-end; font-size: 17.600px; line-height: 23px; padding-top: 1px; }
.count { width: 30px; height: 24px; margin-left: 8px; border-radius: 12px; background: #4cc2ff; color: #111; font-size: 14.500px; font-weight: 400; line-height: 24px; text-align: center; }
```
